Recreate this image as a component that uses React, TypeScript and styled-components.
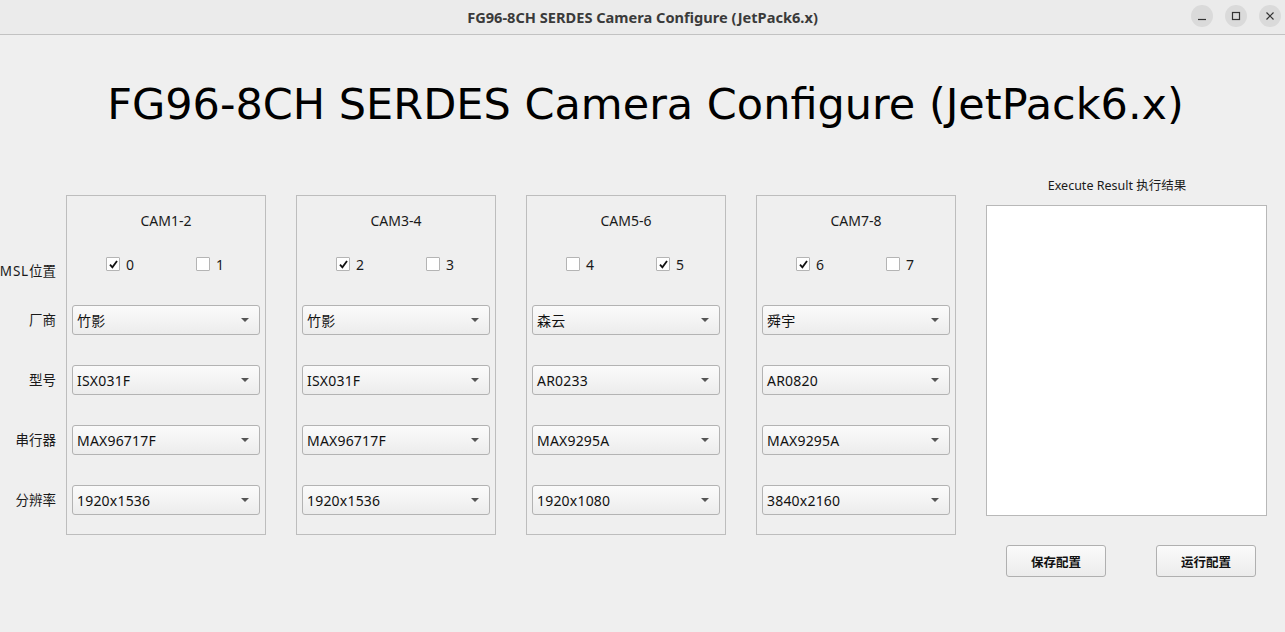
import React from "react";
import styled, { createGlobalStyle } from "styled-components";

const Global = createGlobalStyle`
  html, body { margin: 0; padding: 0; background: #efefef; }
  body { font-family: "Noto Sans", "Noto Sans CJK SC", sans-serif; }
  * { box-sizing: border-box; }
`;

const Window = styled.div`
  width: 1285px;
  height: 632px;
  display: flex;
  flex-direction: column;
  background: #efefef;
  overflow: hidden;
`;

const TitleBar = styled.div`
  height: 35px;
  flex: none;
  background: #ebebeb;
  border-bottom: 1px solid #c2c2c2;
  position: relative;
  display: flex;
  align-items: center;
  justify-content: center;
`;

const TitleText = styled.div`
  font-family: "Noto Sans", sans-serif;
  font-weight: 700;
  font-size: 14.6px;
  color: #3a3a3a;
`;

const WinButtons = styled.div`
  position: absolute;
  right: 4px;
  top: 5px;
  display: flex;
  gap: 12px;
`;

const WinButton = styled.div`
  width: 22px;
  height: 22px;
  border-radius: 50%;
  background: #dadada;
  display: flex;
  align-items: center;
  justify-content: center;
`;

const Body = styled.div`
  flex: 1;
  display: flex;
  flex-direction: column;
`;

const Heading = styled.h1`
  margin: 0;
  height: 124px;
  padding-top: 43px;
  padding-left: 6px;
  text-align: center;
  font-family: "DejaVu Sans", sans-serif;
  font-weight: 400;
  font-size: 43px;
  line-height: 52px;
  color: #000;
`;

const Content = styled.div`
  display: flex;
  align-items: flex-start;
`;

const LabelColumn = styled.div`
  width: 56px;
  flex: none;
  overflow: hidden;
  display: flex;
  flex-direction: column;
  align-items: flex-end;
  padding-top: 97px;
`;

const RowLabel = styled.div<{ $gap: number }>`
  height: 30px;
  line-height: 30px;
  margin-top: ${(p) => p.$gap}px;
  white-space: nowrap;
  font-size: 13.5px;
  color: #1a1a1a;
  font-family: "Noto Sans", "Noto Sans CJK SC", sans-serif;
`;

const Latin = styled.span`
  letter-spacing: 0.8px;
`;

const Groups = styled.div`
  display: flex;
  gap: 30px;
  margin-left: 10px;
  margin-top: 36px;
`;

const GroupBox = styled.div`
  width: 200px;
  height: 340px;
  border: 1px solid #bdbdbd;
  display: flex;
  flex-direction: column;
  align-items: stretch;
  padding: 0 5px;
`;

const GroupTitle = styled.div`
  height: 51px;
  padding-top: 15px;
  text-align: center;
  font-size: 14px;
  line-height: 20px;
  color: #1a1a1a;
`;

const CheckRow = styled.div`
  display: flex;
  height: 34px;
  padding-left: 34px;
  align-items: center;
`;

const CheckItem = styled.label`
  width: 90px;
  flex: none;
  display: flex;
  align-items: center;
  gap: 6px;
  font-size: 14px;
  color: #1a1a1a;
`;

const Box = styled.span`
  width: 14px;
  height: 14px;
  background: #fff;
  border: 1px solid #b4b4b4;
  border-radius: 1px;
  display: flex;
  align-items: center;
  justify-content: center;
`;

const Combos = styled.div`
  display: flex;
  flex-direction: column;
  gap: 30px;
  margin-top: 24px;
`;

const Combo = styled.div`
  height: 30px;
  border: 1px solid #b3b3b3;
  border-radius: 3px;
  background: linear-gradient(#fbfbfb, #ececec);
  display: flex;
  align-items: center;
  justify-content: space-between;
  padding: 0 10px 0 4px;
  font-size: 14px;
  letter-spacing: 0.2px;
  color: #111;
  font-family: "Noto Sans", "Noto Sans CJK SC", sans-serif;
`;

const Arrow = styled.span`
  width: 0;
  height: 0;
  border-left: 4px solid transparent;
  border-right: 4px solid transparent;
  border-top: 4px solid #555;
`;

const ResultPanel = styled.div`
  margin-left: 30px;
  margin-top: 18px;
  width: 281px;
  display: flex;
  flex-direction: column;
  align-items: stretch;
`;

const ResultLabel = styled.div`
  text-align: center;
  font-size: 12.5px;
  line-height: 18px;
  color: #1a1a1a;
  height: 18px;
  margin: 0 0 10px -19px;
`;

const ResultBox = styled.div`
  height: 311px;
  background: #fff;
  border: 1px solid #b8b8b8;
`;

const ButtonRow = styled.div`
  display: flex;
  justify-content: space-between;
  padding: 0 11px 0 20px;
  margin-top: 29px;
`;

const PushButton = styled.button`
  width: 100px;
  height: 32px;
  border: 1px solid #b0b0b0;
  border-radius: 3px;
  background: linear-gradient(#fbfbfb, #ececec);
  font-family: "Noto Sans CJK SC", sans-serif;
  font-weight: 700;
  font-size: 12.5px;
  color: #111;
  padding: 0;
`;

const Check = () => (
  <svg width="11" height="11" viewBox="0 0 11 11">
    <path d="M2 5.6 L4.4 8.4 L9 2" fill="none" stroke="#111" strokeWidth="1.8" />
  </svg>
);

type Cam = {
  title: string;
  checks: [string, boolean][];
  values: string[];
};

const cams: Cam[] = [
  { title: "CAM1-2", checks: [["0", true], ["1", false]], values: ["竹影", "ISX031F", "MAX96717F", "1920x1536"] },
  { title: "CAM3-4", checks: [["2", true], ["3", false]], values: ["竹影", "ISX031F", "MAX96717F", "1920x1536"] },
  { title: "CAM5-6", checks: [["4", false], ["5", true]], values: ["森云", "AR0233", "MAX9295A", "1920x1080"] },
  { title: "CAM7-8", checks: [["6", true], ["7", false]], values: ["舜宇", "AR0820", "MAX9295A", "3840x2160"] },
];

const labels: [React.ReactNode, number][] = [
  [<><Latin>MSL</Latin>位置</>, 0],
  ["厂商", 19],
  ["型号", 30],
  ["串行器", 30],
  ["分辨率", 30],
];

export default function App() {
  return (
    <Window>
      <Global />
      <TitleBar>
        <TitleText>FG96-8CH SERDES Camera Configure (JetPack6.x)</TitleText>
        <WinButtons>
          <WinButton>
            <svg width="10" height="10" viewBox="0 0 10 10">
              <path d="M1 8.5 H9" stroke="#333" strokeWidth="1.2" />
            </svg>
          </WinButton>
          <WinButton>
            <svg width="10" height="10" viewBox="0 0 10 10">
              <rect x="1.5" y="1.5" width="7" height="7" fill="none" stroke="#333" strokeWidth="1.2" />
            </svg>
          </WinButton>
          <WinButton>
            <svg width="10" height="10" viewBox="0 0 10 10">
              <path d="M1.5 1.5 L8.5 8.5 M8.5 1.5 L1.5 8.5" stroke="#333" strokeWidth="1.2" />
            </svg>
          </WinButton>
        </WinButtons>
      </TitleBar>
      <Body>
        <Heading>FG96-8CH SERDES Camera Configure (JetPack6.x)</Heading>
        <Content>
          <LabelColumn>
            {labels.map(([t, g], i) => (
              <RowLabel key={i} $gap={g}>
                {t}
              </RowLabel>
            ))}
          </LabelColumn>
          <Groups>
            {cams.map((c) => (
              <GroupBox key={c.title}>
                <GroupTitle>{c.title}</GroupTitle>
                <CheckRow>
                  {c.checks.map(([n, on]) => (
                    <CheckItem key={n}>
                      <Box>{on && <Check />}</Box>
                      {n}
                    </CheckItem>
                  ))}
                </CheckRow>
                <Combos>
                  {c.values.map((v, i) => (
                    <Combo key={i}>
                      <span>{v}</span>
                      <Arrow />
                    </Combo>
                  ))}
                </Combos>
              </GroupBox>
            ))}
          </Groups>
          <ResultPanel>
            <ResultLabel>Execute Result 执行结果</ResultLabel>
            <ResultBox />
            <ButtonRow>
              <PushButton>保存配置</PushButton>
              <PushButton>运行配置</PushButton>
            </ButtonRow>
          </ResultPanel>
        </Content>
      </Body>
    </Window>
  );
}
